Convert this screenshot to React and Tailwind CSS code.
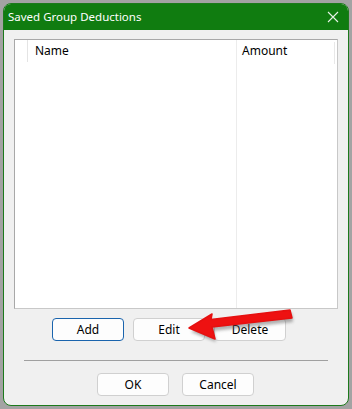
export default function App() {
  const font = { fontFamily: '"Noto Sans", "Open Sans", Arial, sans-serif' };
  return (
    <div className="w-[352px] h-[409px] bg-[#a3a3a3] p-[3px] relative" style={font}>
      <div className="w-[346px] h-[403px] rounded-[8px] border border-[#1c7a1c] bg-[#f0f0f0] flex flex-col overflow-hidden">
        <div className="h-[26px] bg-[#107c10] flex items-center justify-between pl-[4px] pr-[9px] shrink-0">
          <span className="text-white text-[11.5px] leading-none">Saved Group Deductions</span>
          <svg width="12" height="12" viewBox="0 0 12 12">
            <path d="M1 1 L11 11 M11 1 L1 11" stroke="#e6f2e6" strokeWidth="1.1" />
          </svg>
        </div>
        <div className="mt-[9px] ml-[10px] w-[324px] h-[270px] bg-white border border-[#a8a8a8] border-r-[#c8c8c8] border-b-[#c8c8c8] flex">
          <div className="w-[13px] h-[22px] border-r border-[#e4e4e4]" />
          <div className="w-[208px] pl-[7px] pt-[2px] text-[12px] text-black">Name</div>
          <div className="flex-1 border-l border-[#ececec] pl-[5px] pt-[2px] text-[12px] text-black flex">
            <span className="flex-1">Amount</span>
            <div className="w-0 h-[22px] mr-[2px] border-r border-[#e8e8e8]" />
          </div>
        </div>
        <div className="mt-[9px] ml-[48px] flex gap-[9px]">
          <button className="w-[72px] h-[23px] rounded-[4px] border border-[#1a64ad] bg-[#fdfdfd] text-[12px] text-black">Add</button>
          <button className="w-[72px] h-[23px] rounded-[4px] border border-[#d0d0d0] bg-[#fdfdfd] text-[12px] text-black">Edit</button>
          <button className="w-[72px] h-[23px] rounded-[4px] border border-[#d0d0d0] bg-[#fdfdfd] text-[12px] text-black">Delete</button>
        </div>
        <div className="mt-[19px] ml-[20px] w-[304px] h-px bg-[#a0a0a0]" />
        <div className="mt-[12px] ml-[93px] flex gap-[13px]">
          <button className="w-[72px] h-[23px] rounded-[4px] border border-[#d0d0d0] bg-[#fdfdfd] text-[12px] text-black">OK</button>
          <button className="w-[72px] h-[23px] rounded-[4px] border border-[#d0d0d0] bg-[#fdfdfd] text-[12px] text-black">Cancel</button>
        </div>
      </div>
      <svg className="absolute left-0 top-0 pointer-events-none" width="352" height="409" viewBox="0 0 352 409">
        <defs>
          <filter id="sh" x="-20%" y="-50%" width="140%" height="200%">
            <feGaussianBlur stdDeviation="1.6" />
          </filter>
        </defs>
        <path d="M191 332 L214 318 L213 323 L292 313 L293 322 L214 331 L216 342 Z" fill="#555" opacity="0.45" filter="url(#sh)" />
        <path d="M189 328 L212 314 L211 319.5 L290 310 L292 318 L212 327 L215 339 Z" fill="#ee1111" strokeLinejoin="round" stroke="#e51010" strokeWidth="1.5" />
      </svg>
    </div>
  );
}
